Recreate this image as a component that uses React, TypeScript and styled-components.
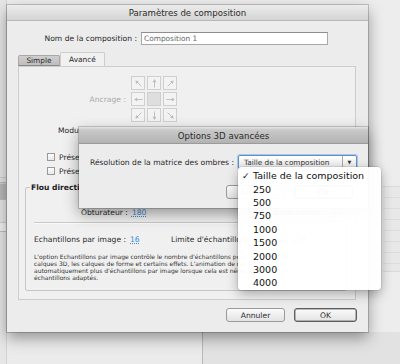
import React from 'react';
import styled, { createGlobalStyle } from 'styled-components';

const GlobalStyle = createGlobalStyle`
  html, body {
    margin: 0;
    padding: 0;
  }
  body {
    width: 400px;
    height: 364px;
    overflow: hidden;
    font-family: 'DejaVu Sans', 'Lucida Grande', sans-serif;
    color: #262626;
    background: #e9e9e9;
  }
`;

const Desktop = styled.div`
  position: relative;
  width: 400px;
  height: 364px;
  overflow: hidden;
  background: #ececec;
`;

/* ---------- background application (mostly hidden) ---------- */

const BackApp = styled.div`
  display: grid;
  grid-template-columns: 7px 1fr;
  grid-template-rows: 1fr 32px;
  height: 100%;
`;

const LeftStrip = styled.div`
  grid-row: 1 / span 2;
  display: flex;
  flex-direction: column;
  background: #e6e6e6;
  border-right: 1px solid #d4d4d4;
`;

const StripBand = styled.div<{ $h: number; $bg: string; $mt?: number }>`
  height: ${(p) => p.$h}px;
  margin-top: ${(p) => p.$mt ?? 0}px;
  background: ${(p) => p.$bg};
  border-top: 1px solid #cfcfcf;
  border-bottom: 1px solid #bdbdbd;
`;

const BackMain = styled.div`
  display: flex;
  justify-content: flex-end;
  background: #ededed;
`;

const BackSidePanel = styled.div`
  width: 17px;
  margin-top: 186px;
  margin-bottom: 60px;
  border-top: 1px solid #dadada;
  border-bottom: 1px solid #dadada;
  background: repeating-linear-gradient(
    180deg,
    #e8e8e8 0,
    #e8e8e8 10px,
    #dcdcdc 10px,
    #dcdcdc 11px
  );
`;

const BackBottom = styled.div`
  display: grid;
  grid-template-columns: 196px 1fr;
`;

const BackBottomLeft = styled.div`
  background: #ebebeb;
  border-right: 1px solid #b8b8b8;
`;

const BackBottomRight = styled.div`
  background: #e2e2e2;
`;

/* ---------- windows ---------- */

const Window = styled.div<{ $left: number; $top: number; $width: number; $height: number }>`
  position: absolute;
  left: ${(p) => p.$left}px;
  top: ${(p) => p.$top}px;
  width: ${(p) => p.$width}px;
  height: ${(p) => p.$height}px;
  display: flex;
  flex-direction: column;
  background: #ececec;
  box-shadow: 0 0 0 1px rgba(0, 0, 0, 0.18), 0 6px 14px rgba(0, 0, 0, 0.38);
`;

const TitleBar = styled.div<{ $dark?: boolean }>`
  flex-shrink: 0;
  height: ${(p) => (p.$dark ? 17 : 16)}px;
  padding-top: ${(p) => (p.$dark ? 2 : 0)}px;
  display: flex;
  align-items: center;
  justify-content: center;
  font-size: 8.6px;
  color: #2b2b2b;
  background: ${(p) =>
    p.$dark
      ? 'linear-gradient(#e4e4e4 0, #c9c9c9 3px, #b3b3b3)'
      : 'linear-gradient(#ececec, #d4d4d4)'};
  border-bottom: 1px solid ${(p) => (p.$dark ? '#9a9a9a' : '#b8b8b8')};
  box-sizing: border-box;
`;

const Body = styled.div`
  flex: 1;
  display: flex;
  flex-direction: column;
  padding: 0 11px;
`;

const Label = styled.span<{ $width?: number; $muted?: boolean }>`
  display: inline-block;
  width: ${(p) => (p.$width ? `${p.$width}px` : 'auto')};
  text-align: ${(p) => (p.$width ? 'right' : 'left')};
  font-size: 7.6px;
  color: ${(p) => (p.$muted ? '#a9a9a9' : '#2a2a2a')};
  white-space: nowrap;
`;

const NameRow = styled.div`
  display: flex;
  align-items: center;
  gap: 4px;
  margin-top: 11px;
  height: 13px;
`;

const TextInput = styled.div`
  width: 187px;
  height: 13px;
  box-sizing: border-box;
  padding-left: 2px;
  display: flex;
  align-items: center;
  background: #fff;
  border: 1px solid #a8a8a8;
  border-top-color: #8e8e8e;
  font-size: 7.4px;
  color: #666;
`;

const TabBar = styled.div`
  display: flex;
  align-items: flex-end;
  height: 14px;
  margin-top: 7px;
`;

const Tab = styled.div<{ $active?: boolean; $width: number }>`
  width: ${(p) => p.$width}px;
  height: ${(p) => (p.$active ? 14 : 11)}px;
  box-sizing: border-box;
  display: flex;
  align-items: center;
  justify-content: center;
  font-size: 7.4px;
  color: #2a2a2a;
  background: ${(p) => (p.$active ? '#f1f1f1' : 'linear-gradient(#cfcfcf, #bdbdbd)')};
  border: 1px solid ${(p) => (p.$active ? '#cdcdcd' : '#a9a9a9')};
  border-bottom: ${(p) => (p.$active ? 'none' : '1px solid #8a8a8a')};
  border-radius: 2px 2px 0 0;
`;

const TabPanel = styled.div`
  width: 338px;
  height: 234px;
  box-sizing: border-box;
  display: flex;
  flex-direction: column;
  background: #f0f0f0;
  border: 1px solid #cdcdcd;
`;

const AnchorRow = styled.div`
  display: flex;
  align-items: center;
  gap: 5px;
  margin-top: 9px;
`;

const AnchorGrid = styled.div`
  display: grid;
  grid-template-columns: repeat(3, 14px);
  grid-template-rows: repeat(3, 14px);
  gap: 2px;
`;

const AnchorCell = styled.div<{ $center?: boolean }>`
  box-sizing: border-box;
  display: flex;
  align-items: center;
  justify-content: center;
  background: ${(p) => (p.$center ? '#dedede' : '#f3f3f3')};
  border: 1px solid #cfcfcf;
`;

const PlainRow = styled.div<{ $mt: number; $pl: number }>`
  display: flex;
  align-items: center;
  gap: 4px;
  height: 12px;
  margin-top: ${(p) => p.$mt}px;
  padding-left: ${(p) => p.$pl}px;
`;

const CheckBox = styled.span`
  width: 8px;
  height: 8px;
  box-sizing: border-box;
  background: linear-gradient(#fdfdfd, #e9e9e9);
  border: 1px solid #9a9a9a;
`;

const GroupBox = styled.fieldset`
  margin: 6px 8px 0 6px;
  padding: 0 8px 0 8px;
  height: 108px;
  box-sizing: border-box;
  border: 1px solid #c6c6c6;
  border-radius: 2px;
  display: flex;
  flex-direction: column;
  overflow: hidden;
  min-width: 0;
`;

const Legend = styled.legend`
  padding: 0 1px;
  margin-left: -4px;
  font-size: 7.6px;
  font-weight: bold;
  color: #222;
`;

const ValueRow = styled.div<{ $mt: number }>`
  display: flex;
  align-items: center;
  height: 12px;
  margin-top: ${(p) => p.$mt}px;
`;

const Field = styled.div<{ $width: number; $pl?: number }>`
  width: ${(p) => p.$width}px;
  padding-left: ${(p) => p.$pl ?? 0}px;
  flex-shrink: 0;
  display: flex;
  align-items: center;
  gap: 4px;
`;

const Scrub = styled.span`
  font-size: 7.6px;
  color: #3c8ad8;
  text-decoration: underline dotted;
`;

const Separator = styled.div`
  height: 1px;
  margin-top: 4px;
  background: #c9c9c9;
  border-bottom: 1px solid #fafafa;
`;

const Help = styled.p`
  margin: 8px 0 0;
  font-size: 6px;
  line-height: 7px;
  color: #333;
  white-space: nowrap;
`;

const ButtonRow = styled.div<{ $mt: number; $pr?: number }>`
  display: flex;
  justify-content: flex-end;
  gap: 9px;
  margin-top: ${(p) => p.$mt}px;
  padding-right: ${(p) => p.$pr ?? 0}px;
`;

const Button = styled.div<{ $default?: boolean; $width: number }>`
  width: ${(p) => p.$width}px;
  height: 14px;
  box-sizing: border-box;
  display: flex;
  align-items: center;
  justify-content: center;
  font-size: 7.6px;
  color: #2a2a2a;
  background: linear-gradient(#fbfbfb, #e3e3e3);
  border: 1px solid ${(p) => (p.$default ? '#5e5e5e' : '#9a9a9a')};
  border-radius: 3px;
  box-shadow: ${(p) => (p.$default ? 'inset 0 0 0 0.5px #7a7a7a' : 'none')};
`;

/* ---------- 3D options sheet ---------- */

const OptionsRow = styled.div`
  display: flex;
  align-items: center;
  margin-top: 11px;
  height: 14px;
`;

const Select = styled.div`
  width: 119px;
  height: 14px;
  box-sizing: border-box;
  display: flex;
  align-items: center;
  margin-left: auto;
  margin-right: 0;
  background: linear-gradient(#ffffff, #e7e7e7);
  border: 1px solid #5f8fcf;
  box-shadow: 0 0 0 1px rgba(120, 165, 225, 0.55);
  border-radius: 2px;
`;

const SelectText = styled.span`
  flex: 1;
  padding-left: 5px;
  font-size: 7.3px;
  color: #333;
  white-space: nowrap;
`;

const SelectArrow = styled.span`
  width: 13px;
  height: 100%;
  display: flex;
  align-items: center;
  justify-content: center;
  border-left: 1px solid #a9a9a9;
  font-size: 5px;
  color: #333;
`;

const Menu = styled.div`
  position: absolute;
  left: 238px;
  top: 167px;
  width: 143px;
  height: 123px;
  box-sizing: border-box;
  padding-top: 2px;
  background: rgba(255, 255, 255, 0.97);
  border-radius: 4px;
  box-shadow: 0 0 0 1px rgba(0, 0, 0, 0.08), 0 4px 12px rgba(0, 0, 0, 0.3);
  display: flex;
  flex-direction: column;
`;

const MenuItem = styled.div`
  height: 13.4px;
  display: flex;
  align-items: center;
  font-size: 9.5px;
  color: #111;
  white-space: nowrap;
`;

const Check = styled.span`
  width: 15px;
  padding-left: 4px;
  box-sizing: border-box;
  font-size: 9px;
`;

const Arrow = ({ angle }: { angle: number }) => (
  <svg width="11" height="11" viewBox="0 0 12 12">
    <g transform={`rotate(${angle} 6 6)`} fill="#bdbdbd" stroke="#bdbdbd">
      <path d="M6 10.5V3.5" strokeWidth="1" fill="none" />
      <path d="M6 1.2L3.9 4.6H8.1Z" stroke="none" />
    </g>
  </svg>
);

const anchorAngles = [-45, 0, 45, -90, null, 90, -135, 180, 135];

const menuItems = ['250', '500', '750', '1000', '1500', '2000', '3000', '4000'];

const App = () => {
  return (
    <>
      <GlobalStyle />
      <Desktop>
        <BackApp>
          <LeftStrip>
            <StripBand $mt={177} $h={4} $bg="#e2e2e2" />
            <StripBand $h={15} $bg="#b8b8b8" />
            <StripBand $mt={22} $h={8} $bg="#f2f2f2" />
          </LeftStrip>
          <BackMain>
            <BackSidePanel />
          </BackMain>
          <BackBottom>
            <BackBottomLeft />
            <BackBottomRight />
          </BackBottom>
        </BackApp>

        <Window $left={7} $top={5} $width={361} $height={327}>
          <TitleBar>Paramètres de composition</TitleBar>
          <Body>
            <NameRow>
              <Label $width={119}>Nom de la composition :</Label>
              <TextInput>Composition 1</TextInput>
            </NameRow>

            <TabBar>
              <Tab $width={42}>Simple</Tab>
              <Tab $width={45} $active>
                Avancé
              </Tab>
            </TabBar>

            <TabPanel>
              <AnchorRow>
                <Label $width={107} $muted>
                  Ancrage :
                </Label>
                <AnchorGrid>
                  {anchorAngles.map((a, i) =>
                    a === null ? (
                      <AnchorCell key={i} $center />
                    ) : (
                      <AnchorCell key={i}>
                        <Arrow angle={a} />
                      </AnchorCell>
                    )
                  )}
                </AnchorGrid>
              </AnchorRow>

              <PlainRow $mt={2} $pl={39}>
                <Label>Module de rendu : Classic 3D</Label>
              </PlainRow>
              <PlainRow $mt={15} $pl={28}>
                <CheckBox />
                <Label>Préserver la cadence lors de l'imbrication</Label>
              </PlainRow>
              <PlainRow $mt={2} $pl={28}>
                <CheckBox />
                <Label>Préserver la résolution lors de l'imbrication</Label>
              </PlainRow>

              <GroupBox>
                <Legend>Flou directionnel</Legend>
                <ValueRow $mt={14}>
                  <Field $width={167} $pl={47}>
                    <Label>Obturateur :</Label>
                    <Scrub>180</Scrub>
                  </Field>
                  <Field $width={120}>
                    <Label>Phase d'obturateur :</Label>
                    <Scrub>-90</Scrub>
                  </Field>
                </ValueRow>
                <Separator />
                <ValueRow $mt={9}>
                  <Field $width={137}>
                    <Label>Echantillons par image :</Label>
                    <Scrub>16</Scrub>
                  </Field>
                  <Field $width={160}>
                    <Label>Limite d'échantillons adaptés :</Label>
                    <Scrub>128</Scrub>
                  </Field>
                </ValueRow>
                <Help>
                  L'option Echantillons par image contrôle le nombre d'échantillons pour les
                  <br />
                  calques 3D, les calques de forme et certains effets. L'animation de ces effets
                  <br />
                  automatiquement plus d'échantillons par image lorsque cela est nécessaire
                  <br />
                  échantillons adaptés.
                </Help>
              </GroupBox>
            </TabPanel>

            <ButtonRow $mt={8}>
              <Button $width={59}>Annuler</Button>
              <Button $width={63} $default>
                OK
              </Button>
            </ButtonRow>
          </Body>
        </Window>

        <Window $left={79} $top={127} $width={289} $height={81}>
          <TitleBar $dark>Options 3D avancées</TitleBar>
          <Body>
            <OptionsRow>
              <Label>Résolution de la matrice des ombres :</Label>
              <Select>
                <SelectText>Taille de la composition</SelectText>
                <SelectArrow>▼</SelectArrow>
              </Select>
            </OptionsRow>
            <ButtonRow $mt={16} $pr={4}>
              <Button $width={59}>Annuler</Button>
              <Button $width={59} $default>
                OK
              </Button>
            </ButtonRow>
          </Body>
        </Window>

        <Menu>
          <MenuItem>
            <Check>✓</Check>Taille de la composition
          </MenuItem>
          {menuItems.map((m) => (
            <MenuItem key={m}>
              <Check />
              {m}
            </MenuItem>
          ))}
        </Menu>
      </Desktop>
    </>
  );
};

export default App;
